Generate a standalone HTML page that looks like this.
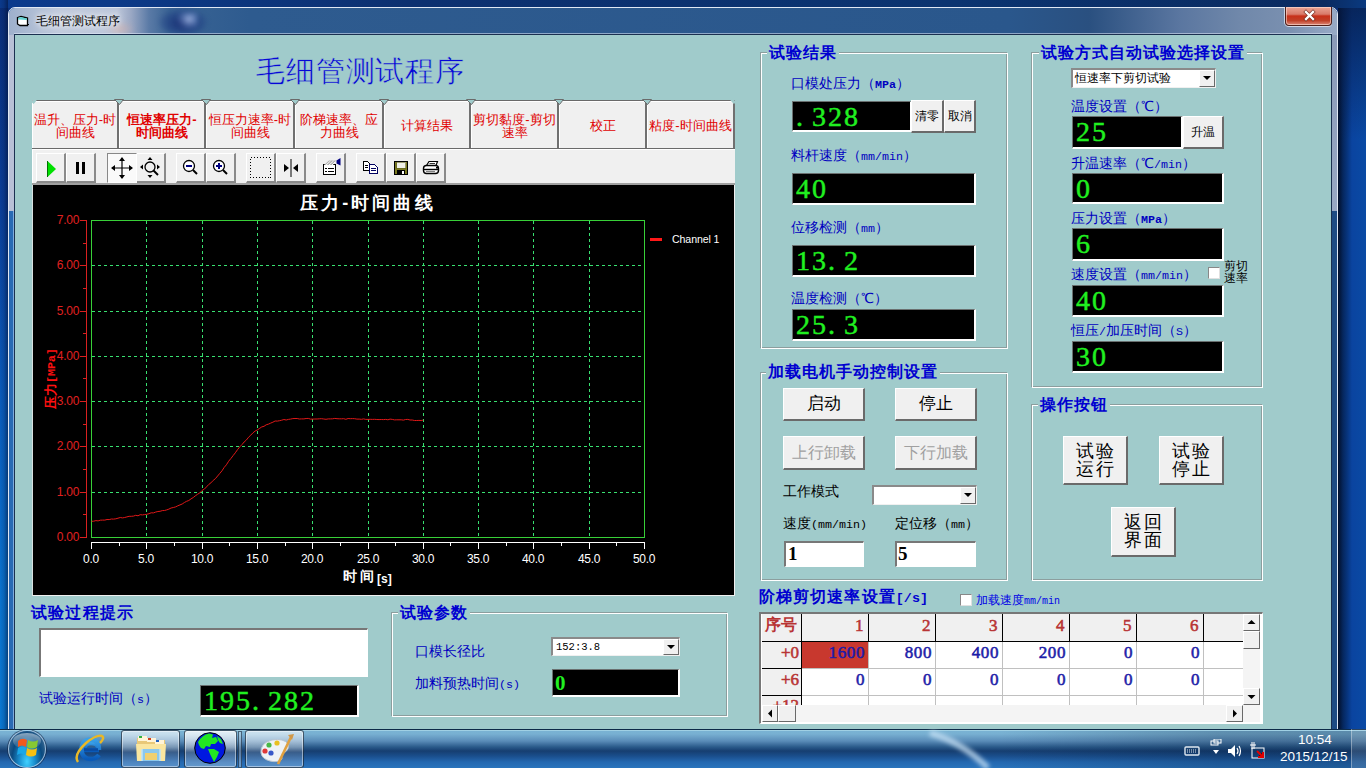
<!DOCTYPE html><html><head><meta charset="utf-8"><style>
*{box-sizing:border-box}
html,body{margin:0;padding:0}
body{width:1366px;height:768px;overflow:hidden;position:relative;background:#0d4c9c;font-family:"Liberation Sans",sans-serif;font-size:12px}
.a{position:absolute}
.t{position:absolute;white-space:nowrap;line-height:1}
.gb{position:absolute;border:1px solid #8c9e9e}
.gw{position:absolute;border:1px solid #fff}
.gt{position:absolute;white-space:nowrap;line-height:16px;color:#0000d0;font-weight:bold;font-size:16px;background:#a0cbcb;padding:0 2px;letter-spacing:1px}
.lbl{position:absolute;white-space:nowrap;line-height:13px;color:#0000e6;font-size:13px;font-weight:300}
.lcd{position:absolute;background:#000;border-top:1px solid #6a7070;border-left:1px solid #6a7070;border-bottom:2px solid #fff;border-right:2px solid #fff;overflow:hidden}
.lcd>span{position:absolute;left:1px;font-family:"Liberation Serif",serif;color:#20f020;-webkit-text-stroke:0.45px #20f020;letter-spacing:2px;white-space:nowrap;line-height:1}
.btn{position:absolute;background:#f0f0f0;border-top:1px solid #fff;border-left:1px solid #fff;border-right:2px solid #6a6a6a;border-bottom:2px solid #6a6a6a;color:#000;text-align:center;white-space:nowrap;font-weight:300}
.tb{position:absolute;top:153px;width:30px;height:30px;background:#f0f0f0;border-top:1px solid #fff;border-left:1px solid #fff;border-right:2px solid #8a8a8a;border-bottom:2px solid #8a8a8a}
.tab{position:absolute;top:100px;height:49px;background:#f0f0f0;border-top:1px solid #6a6a6a;border-left:1px solid #fff;border-right:2px solid #707070;box-shadow:inset 0 1px 0 #fff;color:#e00000;text-align:center;font-size:13px;line-height:13px;font-weight:300}
.wb{position:absolute;background:#fff;border-top:2px solid #777;border-left:2px solid #777;border-bottom:1px solid #fff;border-right:1px solid #fff}
.combo{position:absolute;background:#fff;border-top:2px solid #8a8a8a;border-left:2px solid #8a8a8a;border-bottom:1px solid #f0f0f0;border-right:1px solid #f0f0f0}
.dd{position:absolute;right:0;top:0;bottom:0;width:16px;background:#f0f0f0;border-top:1px solid #fff;border-left:1px solid #fff;border-right:1px solid #6a6a6a;border-bottom:1px solid #6a6a6a}
.dd:after{content:"";position:absolute;left:3px;top:5px;border-left:4px solid transparent;border-right:4px solid transparent;border-top:4px solid #000}
</style></head><body>
<div class="a" style="left:0px;top:0px;width:1366px;height:768px;background:linear-gradient(#0a2e78 0,#0b3e98 200px,#0a5cbc 400px,#0a74d0 600px,#0a7ad4 768px)"></div>
<div class="a" style="left:1338px;top:0px;width:28px;height:768px;background:linear-gradient(90deg,#020e28 0,#05275e 5px,#0a44a0 14px,#0a4aa4 28px)"></div>
<div class="a" style="left:1338px;top:0px;width:28px;height:140px;background:linear-gradient(rgba(6,24,64,.75),rgba(6,24,64,0))"></div>
<div class="a" style="left:0px;top:0px;width:1366px;height:8px;background:linear-gradient(90deg,#0b3a8c,#0c3a88 8%,#0c3070 30%,#0b3470 70%,#0a2a60 97%,#0a3a80)"></div>
<div class="a" style="left:8px;top:7px;width:1330px;height:770px;border-radius:7px 7px 0 0;background:linear-gradient(90deg,#2a6ab4 0,#2a6ab4 7px,#1e4c84 1323px,#1e4c84 1330px);border:1px solid #e0e8f4"></div>
<div class="a" style="left:9px;top:8px;width:1328px;height:27px;border-radius:6px 6px 0 0;background:linear-gradient(90deg,#9eb0cc 0,#c0cadc 50px,#bcc6da 108px,#9aa8c4 122px,#5a7aa6 140px,#3a6494 160px,#2e5b8f 240px,#2a578c 1000px,#2a5080 1080px,#5a76a0 1170px,#7088aa 1230px,#7a90b0 1280px,#98aac6 1328px)"></div>
<div class="a" style="left:158px;top:8px;width:50px;height:27px;border-radius:50%;filter:blur(2px);background:radial-gradient(ellipse at 50% 55%,rgba(20,40,110,.9) 0,rgba(30,60,130,.6) 45%,rgba(40,80,140,0) 75%)"></div>
<div class="a" style="left:176px;top:12px;width:22px;height:18px;filter:blur(2px);background:radial-gradient(ellipse at 60% 40%,rgba(190,210,250,.75) 0,rgba(160,190,240,.3) 40%,transparent 70%)"></div>
<div class="a" style="left:105px;top:22px;width:30px;height:14px;filter:blur(3px);background:radial-gradient(ellipse,rgba(230,170,150,.55),transparent 70%)"></div>
<div class="a" style="left:9px;top:25px;width:1328px;height:10px;background:linear-gradient(90deg,rgba(160,180,210,.0) 0,rgba(120,150,190,.0) 100%)"></div>
<div class="a" style="left:0px;top:0px;width:8px;height:768px;background:linear-gradient(90deg,rgba(0,0,0,0) 0,rgba(0,10,40,.15) 4px,rgba(0,10,40,.5) 8px)"></div>
<div class="a" style="left:13px;top:211px;width:1px;height:520px;background:rgba(200,225,255,.55)"></div>
<div class="a" style="left:9px;top:35px;width:5px;height:176px;background:#b8c0d6"></div>
<div class="a" style="left:1332px;top:35px;width:5px;height:176px;background:linear-gradient(#8a9ab8,#98a8c4)"></div>
<svg class="a" style="left:16px;top:15px" width="14" height="12" viewBox="0 0 14 12"><path d="M1.5 2.5 L5 1.5 L11.5 3 V10.5 L4 10.5 L1.5 9Z" fill="#fff" stroke="#000" stroke-width="1.3"/><path d="M2 3 L5 2 L11 3.5 V5 L2 4.5Z" fill="#60d0d0"/><path d="M12 9 L13 10" stroke="#000"/></svg>
<div class="t" style="left:36px;top:15px;font-size:12px;color:#000;font-weight:400;text-shadow:0 0 5px #fff,0 0 8px #fff">毛细管测试程序</div>
<div class="a" style="left:1285px;top:7px;width:47px;height:19px;border:1px solid #50201a;border-top:none;border-radius:0 0 4px 4px;box-shadow:0 1px 0 #d0d8e8,inset 0 0 0 1px rgba(255,230,220,.55),-1px 0 0 rgba(230,240,255,.7);background:linear-gradient(#eaa494 0,#d87a6a 40%,#c8301a 50%,#c04028 75%,#dc8878 100%)"></div>
<svg class="a" style="left:1300px;top:9px" width="18" height="14" viewBox="0 0 18 14"><path d="M6 3 L13 10 M13 3 L6 10" stroke="#6a2a20" stroke-width="3.8" stroke-linecap="square" opacity=".8"/><path d="M6 3 L13 10 M13 3 L6 10" stroke="#fff" stroke-width="2.3" stroke-linecap="square"/></svg>
<div class="a" style="left:14px;top:33px;width:1318px;height:1px;background:rgba(225,235,250,.55)"></div>
<div class="a" style="left:14px;top:34px;width:1318px;height:720px;background:#a0cbcb;border:1px solid #1b3050;border-bottom:none"></div>
<div class="t" style="left:256px;top:57px;font-size:29px;color:#0606d8;letter-spacing:0.85px;-webkit-text-stroke:0.5px #a0cbcb">毛细管测试程序</div>
<div class="tab" style="left:32px;width:87px;padding-top:12px;">温升、压力-时<br>间曲线</div>
<div class="tab" style="left:119px;width:87px;padding-top:12px;font-weight:bold;">恒速率压力-<br>时间曲线</div>
<div class="tab" style="left:206px;width:89px;padding-top:12px;">恒压力速率-时<br>间曲线</div>
<div class="tab" style="left:295px;width:89px;padding-top:12px;">阶梯速率、应<br>力曲线</div>
<div class="tab" style="left:384px;width:87px;padding-top:18px;">计算结果</div>
<div class="tab" style="left:471px;width:88px;padding-top:12px;">剪切黏度-剪切<br>速率</div>
<div class="tab" style="left:559px;width:88px;padding-top:18px;">校正</div>
<div class="tab" style="left:647px;width:88px;padding-top:18px;">粘度-时间曲线</div>
<div class="a" style="left:32px;top:148px;width:703px;height:2px;background:#6a6a6a"></div>
<svg class="a" style="left:0;top:0" width="760" height="110"><path d="M114.5 99.5 L119.5 104.5 L123.5 99.5Z" fill="#a0cbcb" stroke="#6a6a6a" stroke-width="1"/><path d="M201.5 99.5 L206.5 104.5 L210.5 99.5Z" fill="#a0cbcb" stroke="#6a6a6a" stroke-width="1"/><path d="M290.5 99.5 L295.5 104.5 L299.5 99.5Z" fill="#a0cbcb" stroke="#6a6a6a" stroke-width="1"/><path d="M379.5 99.5 L384.5 104.5 L388.5 99.5Z" fill="#a0cbcb" stroke="#6a6a6a" stroke-width="1"/><path d="M466.5 99.5 L471.5 104.5 L475.5 99.5Z" fill="#a0cbcb" stroke="#6a6a6a" stroke-width="1"/><path d="M554.5 99.5 L559.5 104.5 L563.5 99.5Z" fill="#a0cbcb" stroke="#6a6a6a" stroke-width="1"/><path d="M642.5 99.5 L647.5 104.5 L651.5 99.5Z" fill="#a0cbcb" stroke="#6a6a6a" stroke-width="1"/><path d="M32.5 103 L35.5 99.5" stroke="#a0cbcb" stroke-width="3"/><path d="M731.5 99.5 L735 103" stroke="#a0cbcb" stroke-width="3"/></svg>
<div class="a" style="left:32px;top:149px;width:703px;height:36px;background:#f0f0f0;border-top:1px solid #fff;border-left:1px solid #fff"></div>
<div class="a" style="left:32px;top:183px;width:703px;height:2px;background:#a0a0a0"></div>
<div class="tb" style="left:36px"></div>
<div class="tb" style="left:66px"></div>
<div class="tb" style="left:107px"></div>
<div class="tb" style="left:136px"></div>
<div class="tb" style="left:176px"></div>
<div class="tb" style="left:206px"></div>
<div class="tb" style="left:246px"></div>
<div class="tb" style="left:276px"></div>
<div class="tb" style="left:316px"></div>
<div class="tb" style="left:356px"></div>
<div class="tb" style="left:386px"></div>
<div class="tb" style="left:416px"></div>
<svg class="a" style="left:36px;top:153px" width="30" height="30" viewBox="0 0 30 30"><path d="M11.5 8 L20 16 L11.5 24 Z" fill="#00e000"/><path d="M11.5 24 L11.5 8" stroke="#007000" stroke-width="1"/></svg>
<svg class="a" style="left:66px;top:153px" width="30" height="30" viewBox="0 0 30 30"><rect x="10" y="9" width="3" height="12" fill="#000"/><rect x="16" y="9" width="3" height="12" fill="#000"/></svg>
<div class="a" style="left:107px;top:153px;width:30px;height:30px;background:#fafafa;border:1px solid #888;border-right-color:#fff;border-bottom-color:#fff"></div>
<svg class="a" style="left:107px;top:153px" width="30" height="30" viewBox="0 0 30 30"><path d="M15 5 V25 M5 15 H25" stroke="#000" stroke-width="1.2"/><path d="M15 4 L12 8 H18Z M15 26 L12 22 H18Z M4 15 L8 12 V18Z M26 15 L22 12 V18Z" fill="#000"/></svg>
<svg class="a" style="left:136px;top:153px" width="30" height="30" viewBox="0 0 30 30"><circle cx="14" cy="14" r="5" fill="none" stroke="#000" stroke-width="1.3"/><path d="M17.5 17.5 L22 22" stroke="#000" stroke-width="2"/><path d="M14 4 L11.5 7 H16.5Z M14 25 L11.5 22 H16.5Z M4 14 L7 11.5 V16.5Z M24 14 L21 11.5 V16.5Z" fill="#000"/></svg>
<svg class="a" style="left:176px;top:153px" width="30" height="30" viewBox="0 0 30 30"><circle cx="13" cy="13" r="5.5" fill="#fff" stroke="#000" stroke-width="1.3"/><path d="M10 13 H16" stroke="#000080" stroke-width="2"/><path d="M17 17 L21 21" stroke="#000" stroke-width="2"/></svg>
<svg class="a" style="left:206px;top:153px" width="30" height="30" viewBox="0 0 30 30"><circle cx="13" cy="13" r="5.5" fill="#fff" stroke="#000" stroke-width="1.3"/><path d="M10 13 H16 M13 10 V16" stroke="#000080" stroke-width="2"/><path d="M17 17 L21 21" stroke="#000" stroke-width="2"/></svg>
<svg class="a" style="left:246px;top:153px" width="30" height="30" viewBox="0 0 30 30"><rect x="4.5" y="4.5" width="20" height="20" fill="none" stroke="#000" stroke-width="1" stroke-dasharray="1,2" shape-rendering="crispEdges"/></svg>
<svg class="a" style="left:276px;top:153px" width="30" height="30" viewBox="0 0 30 30"><path d="M15 6 V24" stroke="#000" stroke-width="1"/><path d="M8 11 L13 15 L8 19Z M22 11 L17 15 L22 19Z" fill="#000"/></svg>
<svg class="a" style="left:316px;top:153px" width="30" height="30" viewBox="0 0 30 30"><g shape-rendering="crispEdges"><rect x="7.5" y="11.5" width="12" height="10" fill="#fff" stroke="#000" stroke-width="1.4"/><path d="M9 15.5H11M12 15.5H18M9 18.5H11M12 18.5H18" stroke="#000" stroke-width="1"/></g><path d="M8 12 L13 7.5 H20.5 L17 12Z" fill="#b0b0b0"/><path d="M10 12 L14.5 8 M13 12 L17.5 8 M16 12 L19.5 8.5" stroke="#fff" stroke-width="0.9"/><path d="M20.5 7.5 L24.5 5 V12.5 L20.5 10.5Z" fill="#000080"/></svg>
<svg class="a" style="left:356px;top:153px" width="30" height="30" viewBox="0 0 30 30"><g shape-rendering="crispEdges"><path d="M7.5 8.5 H11.5 L13.5 10.5 V17.5 H7.5Z" fill="#fff" stroke="#000" stroke-width="1.3"/><path d="M9 12.5H12 M9 14.5H12" stroke="#000"/><path d="M13.5 11.5 H18.5 L21.5 14.5 V20.5 H13.5Z" fill="#fff" stroke="#000060" stroke-width="1.3"/><path d="M15 15.5H20 M15 17.5H20" stroke="#000060"/></g></svg>
<svg class="a" style="left:386px;top:153px" width="30" height="30" viewBox="0 0 30 30"><g shape-rendering="crispEdges"><rect x="8.5" y="8.5" width="13" height="13" fill="#7a7a20" stroke="#000" stroke-width="1.2"/><rect x="10.5" y="9" width="9" height="6" fill="#f0f0e8" stroke="#606020" stroke-width="0.6"/><rect x="11" y="16.5" width="8" height="5" fill="#000"/><rect x="16" y="17.5" width="2" height="3" fill="#fff"/></g></svg>
<svg class="a" style="left:416px;top:153px" width="30" height="30" viewBox="0 0 30 30"><path d="M10.5 12.5 L13 8.5 H21.5 L20 12.5Z" fill="#fff" stroke="#000" stroke-width="1.2"/><path d="M13.5 10.5H19" stroke="#000" stroke-width="0.8"/><rect x="7.5" y="12.5" width="15" height="8" rx="3" fill="#fff" stroke="#000" stroke-width="1.4"/><path d="M8 16.5H22" stroke="#000" stroke-width="1.4"/><path d="M10 18.5H19" stroke="#808080" stroke-width="1.2"/><rect x="20" y="14" width="2" height="1.5" fill="#000"/></svg>
<div class="a" style="left:32px;top:185px;width:703px;height:411px;background:#000;border-right:1px solid #f0f0f0;border-bottom:1px solid #f0f0f0;border-left:1px solid #d8e0e0"></div>
<svg class="a" style="left:0;top:0" width="1366" height="768"><rect x="91.5" y="220.5" width="553" height="317" fill="none" stroke="#38d038" stroke-width="1"/><line x1="92" y1="492.5" x2="644" y2="492.5" stroke="#38e070" stroke-width="1" stroke-dasharray="3,3"/><line x1="92" y1="446.5" x2="644" y2="446.5" stroke="#38e070" stroke-width="1" stroke-dasharray="3,3"/><line x1="92" y1="401.5" x2="644" y2="401.5" stroke="#38e070" stroke-width="1" stroke-dasharray="3,3"/><line x1="92" y1="356.5" x2="644" y2="356.5" stroke="#38e070" stroke-width="1" stroke-dasharray="3,3"/><line x1="92" y1="311.5" x2="644" y2="311.5" stroke="#38e070" stroke-width="1" stroke-dasharray="3,3"/><line x1="92" y1="265.5" x2="644" y2="265.5" stroke="#38e070" stroke-width="1" stroke-dasharray="3,3"/><line x1="146.5" y1="221" x2="146.5" y2="537" stroke="#38e070" stroke-width="1" stroke-dasharray="3,3"/><line x1="202.5" y1="221" x2="202.5" y2="537" stroke="#38e070" stroke-width="1" stroke-dasharray="3,3"/><line x1="257.5" y1="221" x2="257.5" y2="537" stroke="#38e070" stroke-width="1" stroke-dasharray="3,3"/><line x1="312.5" y1="221" x2="312.5" y2="537" stroke="#38e070" stroke-width="1" stroke-dasharray="3,3"/><line x1="368.5" y1="221" x2="368.5" y2="537" stroke="#38e070" stroke-width="1" stroke-dasharray="3,3"/><line x1="423.5" y1="221" x2="423.5" y2="537" stroke="#38e070" stroke-width="1" stroke-dasharray="3,3"/><line x1="478.5" y1="221" x2="478.5" y2="537" stroke="#38e070" stroke-width="1" stroke-dasharray="3,3"/><line x1="533.5" y1="221" x2="533.5" y2="537" stroke="#38e070" stroke-width="1" stroke-dasharray="3,3"/><line x1="589.5" y1="221" x2="589.5" y2="537" stroke="#38e070" stroke-width="1" stroke-dasharray="3,3"/><line x1="86.5" y1="220" x2="86.5" y2="538" stroke="#d82020" stroke-width="1"/><line x1="80" y1="537.5" x2="87" y2="537.5" stroke="#d82020" stroke-width="1"/><line x1="83" y1="514.5" x2="87" y2="514.5" stroke="#d82020" stroke-width="1"/><line x1="80" y1="492.5" x2="87" y2="492.5" stroke="#d82020" stroke-width="1"/><line x1="83" y1="469.5" x2="87" y2="469.5" stroke="#d82020" stroke-width="1"/><line x1="80" y1="446.5" x2="87" y2="446.5" stroke="#d82020" stroke-width="1"/><line x1="83" y1="424.5" x2="87" y2="424.5" stroke="#d82020" stroke-width="1"/><line x1="80" y1="401.5" x2="87" y2="401.5" stroke="#d82020" stroke-width="1"/><line x1="83" y1="378.5" x2="87" y2="378.5" stroke="#d82020" stroke-width="1"/><line x1="80" y1="356.5" x2="87" y2="356.5" stroke="#d82020" stroke-width="1"/><line x1="83" y1="333.5" x2="87" y2="333.5" stroke="#d82020" stroke-width="1"/><line x1="80" y1="311.5" x2="87" y2="311.5" stroke="#d82020" stroke-width="1"/><line x1="83" y1="288.5" x2="87" y2="288.5" stroke="#d82020" stroke-width="1"/><line x1="80" y1="265.5" x2="87" y2="265.5" stroke="#d82020" stroke-width="1"/><line x1="83" y1="243.5" x2="87" y2="243.5" stroke="#d82020" stroke-width="1"/><line x1="80" y1="220.5" x2="87" y2="220.5" stroke="#d82020" stroke-width="1"/><line x1="91" y1="542.5" x2="645" y2="542.5" stroke="#fff" stroke-width="1.2"/><line x1="91.5" y1="542" x2="91.5" y2="549" stroke="#fff" stroke-width="1"/><line x1="119.5" y1="542" x2="119.5" y2="546" stroke="#fff" stroke-width="1"/><line x1="146.5" y1="542" x2="146.5" y2="549" stroke="#fff" stroke-width="1"/><line x1="174.5" y1="542" x2="174.5" y2="546" stroke="#fff" stroke-width="1"/><line x1="202.5" y1="542" x2="202.5" y2="549" stroke="#fff" stroke-width="1"/><line x1="229.5" y1="542" x2="229.5" y2="546" stroke="#fff" stroke-width="1"/><line x1="257.5" y1="542" x2="257.5" y2="549" stroke="#fff" stroke-width="1"/><line x1="285.5" y1="542" x2="285.5" y2="546" stroke="#fff" stroke-width="1"/><line x1="312.5" y1="542" x2="312.5" y2="549" stroke="#fff" stroke-width="1"/><line x1="340.5" y1="542" x2="340.5" y2="546" stroke="#fff" stroke-width="1"/><line x1="368.5" y1="542" x2="368.5" y2="549" stroke="#fff" stroke-width="1"/><line x1="395.5" y1="542" x2="395.5" y2="546" stroke="#fff" stroke-width="1"/><line x1="423.5" y1="542" x2="423.5" y2="549" stroke="#fff" stroke-width="1"/><line x1="450.5" y1="542" x2="450.5" y2="546" stroke="#fff" stroke-width="1"/><line x1="478.5" y1="542" x2="478.5" y2="549" stroke="#fff" stroke-width="1"/><line x1="506.5" y1="542" x2="506.5" y2="546" stroke="#fff" stroke-width="1"/><line x1="533.5" y1="542" x2="533.5" y2="549" stroke="#fff" stroke-width="1"/><line x1="561.5" y1="542" x2="561.5" y2="546" stroke="#fff" stroke-width="1"/><line x1="589.5" y1="542" x2="589.5" y2="549" stroke="#fff" stroke-width="1"/><line x1="616.5" y1="542" x2="616.5" y2="546" stroke="#fff" stroke-width="1"/><line x1="644.5" y1="542" x2="644.5" y2="549" stroke="#fff" stroke-width="1"/><polyline fill="none" stroke="#e01818" stroke-width="1" points="91.5,521.3 93.7,521.2 95.9,520.6 98.1,520.9 100.3,520.2 102.6,520.1 104.8,520.1 107.0,519.5 109.2,519.6 111.4,519.0 113.6,519.1 115.8,518.8 118.0,518.2 120.3,517.5 122.5,517.9 124.7,517.5 126.9,516.9 129.1,516.3 131.3,516.3 133.5,516.1 135.7,515.3 138.0,515.8 140.2,514.7 142.4,514.9 144.6,514.6 146.8,514.3 149.0,513.7 151.2,512.8 153.4,512.9 155.6,512.1 157.9,511.5 160.1,511.3 162.3,510.6 164.5,510.5 166.7,509.9 168.9,509.1 171.1,508.0 173.3,507.5 175.6,506.9 177.8,505.8 180.0,504.9 182.2,504.0 184.4,502.5 186.6,501.3 188.8,500.5 191.0,498.9 193.3,497.5 195.5,495.7 197.7,494.2 199.9,492.8 202.1,490.4 204.3,489.2 206.5,486.9 208.7,484.5 210.9,482.9 213.2,480.4 215.4,478.7 217.6,476.0 219.8,473.4 222.0,470.8 224.2,467.4 226.4,464.8 228.6,461.3 230.9,458.5 233.1,455.6 235.3,452.8 237.5,449.7 239.7,446.9 241.9,444.7 244.1,442.0 246.3,440.1 248.6,437.2 250.8,435.1 253.0,432.8 255.2,431.0 257.4,429.9 259.6,428.4 261.8,426.9 264.0,426.3 266.2,424.8 268.5,424.1 270.7,423.1 272.9,422.2 275.1,421.0 277.3,421.1 279.5,420.7 281.7,420.2 283.9,419.5 286.2,420.0 288.4,419.4 290.6,419.1 292.8,418.6 295.0,418.5 297.2,418.5 299.4,419.0 301.6,418.9 303.9,418.9 306.1,418.5 308.3,418.4 310.5,419.1 312.7,419.1 314.9,419.0 317.1,419.0 319.3,418.8 321.5,418.7 323.8,419.0 326.0,419.3 328.2,418.9 330.4,418.9 332.6,418.8 334.8,418.4 337.0,418.7 339.2,418.8 341.5,418.8 343.7,418.7 345.9,419.3 348.1,418.5 350.3,418.7 352.5,418.6 354.7,418.7 356.9,419.1 359.2,419.1 361.4,419.3 363.6,418.9 365.8,419.4 368.0,419.4 370.2,419.3 372.4,419.4 374.6,419.3 376.8,419.5 379.1,419.6 381.3,419.5 383.5,419.6 385.7,419.4 387.9,419.8 390.1,419.1 392.3,419.4 394.5,419.9 396.8,419.8 399.0,419.8 401.2,419.8 403.4,420.1 405.6,419.5 407.8,419.4 410.0,420.0 412.2,420.0 414.5,420.5 416.7,420.5 418.9,420.4 421.1,420.5 423.3,420.1"/><line x1="650" y1="239.5" x2="662" y2="239.5" stroke="#ff1818" stroke-width="3"/></svg>
<div class="t" style="left:40px;top:531px;width:39px;text-align:right;font-size:12px;color:#e02020;letter-spacing:-0.3px">0.00</div>
<div class="t" style="left:40px;top:486px;width:39px;text-align:right;font-size:12px;color:#e02020;letter-spacing:-0.3px">1.00</div>
<div class="t" style="left:40px;top:440px;width:39px;text-align:right;font-size:12px;color:#e02020;letter-spacing:-0.3px">2.00</div>
<div class="t" style="left:40px;top:395px;width:39px;text-align:right;font-size:12px;color:#e02020;letter-spacing:-0.3px">3.00</div>
<div class="t" style="left:40px;top:350px;width:39px;text-align:right;font-size:12px;color:#e02020;letter-spacing:-0.3px">4.00</div>
<div class="t" style="left:40px;top:305px;width:39px;text-align:right;font-size:12px;color:#e02020;letter-spacing:-0.3px">5.00</div>
<div class="t" style="left:40px;top:259px;width:39px;text-align:right;font-size:12px;color:#e02020;letter-spacing:-0.3px">6.00</div>
<div class="t" style="left:40px;top:214px;width:39px;text-align:right;font-size:12px;color:#e02020;letter-spacing:-0.3px">7.00</div>
<div class="t" style="left:71px;top:553px;width:40px;text-align:center;font-size:12px;color:#fff;letter-spacing:-0.3px">0.0</div>
<div class="t" style="left:126px;top:553px;width:40px;text-align:center;font-size:12px;color:#fff;letter-spacing:-0.3px">5.0</div>
<div class="t" style="left:182px;top:553px;width:40px;text-align:center;font-size:12px;color:#fff;letter-spacing:-0.3px">10.0</div>
<div class="t" style="left:237px;top:553px;width:40px;text-align:center;font-size:12px;color:#fff;letter-spacing:-0.3px">15.0</div>
<div class="t" style="left:292px;top:553px;width:40px;text-align:center;font-size:12px;color:#fff;letter-spacing:-0.3px">20.0</div>
<div class="t" style="left:348px;top:553px;width:40px;text-align:center;font-size:12px;color:#fff;letter-spacing:-0.3px">25.0</div>
<div class="t" style="left:403px;top:553px;width:40px;text-align:center;font-size:12px;color:#fff;letter-spacing:-0.3px">30.0</div>
<div class="t" style="left:458px;top:553px;width:40px;text-align:center;font-size:12px;color:#fff;letter-spacing:-0.3px">35.0</div>
<div class="t" style="left:513px;top:553px;width:40px;text-align:center;font-size:12px;color:#fff;letter-spacing:-0.3px">40.0</div>
<div class="t" style="left:569px;top:553px;width:40px;text-align:center;font-size:12px;color:#fff;letter-spacing:-0.3px">45.0</div>
<div class="t" style="left:624px;top:553px;width:40px;text-align:center;font-size:12px;color:#fff;letter-spacing:-0.3px">50.0</div>
<div class="t" style="left:300px;top:194px;font-size:18px;line-height:18px;color:#fff;font-weight:bold;letter-spacing:3.1px">压力-时间曲线</div>
<div class="t" style="left:343px;top:569px;font-size:14px;line-height:14px;color:#fff;font-weight:bold;letter-spacing:3px">时间<span style="font-size:12px;letter-spacing:0;position:relative;top:2px">[s]</span></div>
<div class="t" style="left:18px;top:372px;width:64px;height:13px;line-height:13px;transform:rotate(-90deg);font-size:13px;color:#ff1010;font-weight:bold;text-align:center">压力<span style="font-family:Liberation Mono;font-size:11.67px">[MPa]</span></div>
<div class="t" style="left:672px;top:234px;font-size:10.6px;color:#fff;letter-spacing:-0.1px">Channel 1</div>
<div class="t" style="left:31px;top:605px;font-size:16px;color:#0000d0;font-weight:bold;letter-spacing:1.2px">试验过程提示</div>
<div class="wb" style="left:39px;top:628px;width:329px;height:49px"></div>
<div class="t" style="left:39px;top:691px;font-size:14px;line-height:14px;color:#0000c0;font-weight:300;">试验运行时间（<span style="font-family:Liberation Mono;font-size:11.67px;">s</span>）</div>
<div class="lcd" style="left:200px;top:685px;width:159px;height:32px"><span style="font-size:28px;top:1px;left:3px">195.<span style="display:inline-block;width:7px"></span>282</span></div>
<div class="gb" style="left:391px;top:612px;width:336px;height:104px"></div>
<div class="gw" style="left:392px;top:613px;width:336px;height:104px"></div>
<div class="gt" style="left:398px;top:605px">试验参数</div>
<div class="t" style="left:415px;top:644px;font-size:14px;line-height:14px;color:#0000c0;font-weight:300;">口模长径比</div>
<div class="t" style="left:415px;top:676px;font-size:14px;line-height:14px;color:#0000c0;font-weight:300;">加料预热时间<span style="font-family:Liberation Mono;font-size:11.67px;">(s)</span></div>
<div class="combo" style="left:551px;top:637px;width:129px;height:19px"><div class="t" style="left:2px;top:2px;font-size:12px;font-family:Liberation Mono;font-size:10.5px;top:3px;left:3px;letter-spacing:0px">152:3.8</div><div class="dd"></div></div>
<div class="lcd" style="left:552px;top:669px;width:128px;height:28px"><span style="font-size:21px;top:3px;left:2px;font-weight:bold;-webkit-text-stroke:0">0</span></div>
<div class="gb" style="left:760px;top:52px;width:247px;height:296px"></div>
<div class="gw" style="left:761px;top:53px;width:247px;height:296px"></div>
<div class="gt" style="left:767px;top:45px">试验结果</div>
<div class="t" style="left:791px;top:76px;font-size:14px;line-height:14px;color:#0000c0;font-weight:300;">口模处压力（<span style="font-family:Liberation Mono;font-size:11.67px;font-weight:bold;">MPa</span>）</div>
<div class="lcd" style="left:792px;top:101px;width:120px;height:31px"><span style="font-size:28px;top:1px;left:3px">.<span style="display:inline-block;width:7px"></span>328</span></div>
<div class="btn" style="left:911px;top:100px;width:33px;height:33px;font-size:12px;line-height:30px;">清零</div>
<div class="btn" style="left:944px;top:100px;width:32px;height:33px;font-size:12px;line-height:30px;">取消</div>
<div class="t" style="left:791px;top:148px;font-size:14px;line-height:14px;color:#0000c0;font-weight:300;">料杆速度（<span style="font-family:Liberation Mono;font-size:11.67px;">mm/min</span>）</div>
<div class="lcd" style="left:792px;top:173px;width:184px;height:32px"><span style="font-size:28px;top:1px;left:3px">40</span></div>
<div class="t" style="left:791px;top:220px;font-size:14px;line-height:14px;color:#0000c0;font-weight:300;">位移检测（<span style="font-family:Liberation Mono;font-size:11.67px;">mm</span>）</div>
<div class="lcd" style="left:792px;top:245px;width:184px;height:32px"><span style="font-size:28px;top:1px;left:3px">13.<span style="display:inline-block;width:7px"></span>2</span></div>
<div class="t" style="left:791px;top:291px;font-size:14px;line-height:14px;color:#0000c0;font-weight:300;">温度检测（℃）</div>
<div class="lcd" style="left:792px;top:309px;width:184px;height:32px"><span style="font-size:28px;top:1px;left:3px">25.<span style="display:inline-block;width:7px"></span>3</span></div>
<div class="gb" style="left:760px;top:372px;width:247px;height:208px"></div>
<div class="gw" style="left:761px;top:373px;width:247px;height:208px"></div>
<div class="gt" style="left:766px;top:364px">加载电机手动控制设置</div>
<div class="btn" style="left:783px;top:388px;width:82px;height:33px;font-size:17px;line-height:30px;">启动</div>
<div class="btn" style="left:895px;top:388px;width:82px;height:33px;font-size:17px;line-height:30px;">停止</div>
<div class="btn" style="left:783px;top:436px;width:82px;height:34px;font-size:16px;line-height:31px;color:#a0a0a0">上行卸载</div>
<div class="btn" style="left:895px;top:436px;width:82px;height:34px;font-size:16px;line-height:31px;color:#a0a0a0">下行加载</div>
<div class="t" style="left:783px;top:484px;font-size:14px;line-height:14px;color:#000;font-weight:300;">工作模式</div>
<div class="combo" style="left:872px;top:485px;width:105px;height:20px"><div class="t" style="left:2px;top:2px;font-size:12px;"></div><div class="dd"></div></div>
<div class="t" style="left:783px;top:516px;font-size:14px;line-height:14px;color:#000;font-weight:300;">速度<span style="font-family:Liberation Mono;font-size:11.67px;">(mm/min)</span></div>
<div class="t" style="left:895px;top:516px;font-size:14px;line-height:14px;color:#000;font-weight:300;">定位移（<span style="font-family:Liberation Mono;font-size:11.67px;">mm</span>）</div>
<div class="wb" style="left:784px;top:541px;width:80px;height:26px"><div class="t" style="left:2px;top:1px;font-size:19px;line-height:19px;font-family:Liberation Serif;font-weight:bold">1</div></div>
<div class="wb" style="left:895px;top:541px;width:81px;height:26px"><div class="t" style="left:1px;top:1px;font-size:19px;line-height:19px;font-family:Liberation Serif;font-weight:bold">5</div></div>
<div class="gb" style="left:1031px;top:52px;width:231px;height:335px"></div>
<div class="gw" style="left:1032px;top:53px;width:231px;height:335px"></div>
<div class="gt" style="left:1039px;top:45px">试验方式自动试验选择设置</div>
<div class="combo" style="left:1071px;top:68px;width:145px;height:20px"><div class="t" style="left:2px;top:2px;font-size:12px;font-size:12px;top:2px;font-weight:300">恒速率下剪切试验</div><div class="dd"></div></div>
<div class="t" style="left:1071px;top:99px;font-size:14px;line-height:14px;color:#0000c0;font-weight:300;">温度设置（℃）</div>
<div class="lcd" style="left:1072px;top:116px;width:111px;height:33px"><span style="font-size:28px;top:1px;left:3px">25</span></div>
<div class="btn" style="left:1183px;top:116px;width:41px;height:33px;font-size:12px;line-height:30px;">升温</div>
<div class="t" style="left:1071px;top:156px;font-size:14px;line-height:14px;color:#0000c0;font-weight:300;">升温速率（℃<span style="font-family:Liberation Mono;font-size:11.67px;">/min</span>）</div>
<div class="lcd" style="left:1072px;top:173px;width:152px;height:31px"><span style="font-size:28px;top:1px;left:3px">0</span></div>
<div class="t" style="left:1071px;top:211px;font-size:14px;line-height:14px;color:#0000c0;font-weight:300;">压力设置（<span style="font-family:Liberation Mono;font-size:11.67px;font-weight:bold;">MPa</span>）</div>
<div class="lcd" style="left:1072px;top:228px;width:152px;height:33px"><span style="font-size:28px;top:1px;left:3px">6</span></div>
<div class="t" style="left:1071px;top:267px;font-size:14px;line-height:14px;color:#0000c0;font-weight:300;">速度设置（<span style="font-family:Liberation Mono;font-size:11.67px;">mm/min</span>）</div>
<div class="a" style="left:1208px;top:267px;width:12px;height:12px;background:#fff;border-top:1px solid #888;border-left:1px solid #888;border-right:1px solid #e0e0e0;border-bottom:1px solid #e0e0e0"></div>
<div class="t" style="left:1224px;top:260px;font-size:12px;line-height:12px;color:#000;font-weight:400">剪切<br>速率</div>
<div class="lcd" style="left:1072px;top:285px;width:152px;height:32px"><span style="font-size:28px;top:1px;left:3px">40</span></div>
<div class="t" style="left:1071px;top:323px;font-size:14px;line-height:14px;color:#0000c0;font-weight:300;">恒压<span style="font-family:Liberation Mono;font-size:11.67px;">/</span>加压时间（<span style="font-family:Liberation Mono;font-size:11.67px;">S</span>）</div>
<div class="lcd" style="left:1072px;top:341px;width:152px;height:32px"><span style="font-size:28px;top:1px;left:3px">30</span></div>
<div class="gb" style="left:1031px;top:404px;width:231px;height:176px"></div>
<div class="gw" style="left:1032px;top:405px;width:231px;height:176px"></div>
<div class="gt" style="left:1038px;top:397px">操作按钮</div>
<div class="btn" style="left:1063px;top:436px;width:65px;height:49px;font-size:18px;line-height:18px;padding-top:5px;letter-spacing:1.5px;padding-left:1.5px">试验<br>运行</div>
<div class="btn" style="left:1159px;top:436px;width:65px;height:49px;font-size:18px;line-height:18px;padding-top:5px;letter-spacing:1.5px;padding-left:1.5px">试验<br>停止</div>
<div class="btn" style="left:1111px;top:507px;width:65px;height:50px;font-size:18px;line-height:18px;padding-top:5px;letter-spacing:1.5px;padding-left:1.5px">返回<br>界面</div>
<div class="t" style="left:759px;top:589px;font-size:16px;color:#0000d0;font-weight:bold;letter-spacing:1.1px">阶梯剪切速率设置<span style="font-family:Liberation Mono;font-size:13.4px;letter-spacing:0">[/s]</span></div>
<div class="a" style="left:960px;top:594px;width:12px;height:12px;background:#fff;border-top:1px solid #888;border-left:1px solid #888;border-right:1px solid #e0e0e0;border-bottom:1px solid #e0e0e0"></div>
<div class="t" style="left:976px;top:594px;font-size:12px;color:#0000e6;font-weight:300">加载速度<span style="font-family:Liberation Mono;font-size:10px">mm/min</span></div>
<div class="a" style="left:759px;top:612px;width:504px;height:112px;background:#fff;border-top:2px solid #777;border-left:2px solid #777;border-right:1px solid #fff;border-bottom:1px solid #fff"></div>
<div class="a" style="left:762px;top:614px;width:481px;height:27px;background:#f0f0f0"></div><div class="a" style="left:762px;top:641px;width:39px;height:64px;background:#f0f0f0"></div><div class="a" style="left:802px;top:642px;width:66px;height:26px;background:#c8382e"></div><div class="a" style="left:762px;top:641px;width:481px;height:1px;background:#000"></div><div class="a" style="left:801px;top:614px;width:1px;height:27px;background:#000"></div><div class="a" style="left:868px;top:614px;width:1px;height:27px;background:#000"></div><div class="a" style="left:935px;top:614px;width:1px;height:27px;background:#000"></div><div class="a" style="left:1002px;top:614px;width:1px;height:27px;background:#000"></div><div class="a" style="left:1069px;top:614px;width:1px;height:27px;background:#000"></div><div class="a" style="left:1136px;top:614px;width:1px;height:27px;background:#000"></div><div class="a" style="left:1203px;top:614px;width:1px;height:27px;background:#000"></div><div class="a" style="left:801px;top:641px;width:1px;height:64px;background:#000"></div><div class="a" style="left:762px;top:668px;width:39px;height:1px;background:#000"></div><div class="a" style="left:802px;top:668px;width:441px;height:1px;background:#c0c0c0"></div><div class="a" style="left:762px;top:695px;width:39px;height:1px;background:#000"></div><div class="a" style="left:802px;top:695px;width:441px;height:1px;background:#c0c0c0"></div><div class="a" style="left:868px;top:642px;width:1px;height:63px;background:#c0c0c0"></div><div class="a" style="left:935px;top:642px;width:1px;height:63px;background:#c0c0c0"></div><div class="a" style="left:1002px;top:642px;width:1px;height:63px;background:#c0c0c0"></div><div class="a" style="left:1069px;top:642px;width:1px;height:63px;background:#c0c0c0"></div><div class="a" style="left:1136px;top:642px;width:1px;height:63px;background:#c0c0c0"></div><div class="a" style="left:1203px;top:642px;width:1px;height:63px;background:#c0c0c0"></div><div class="t" style="left:765px;top:617px;font-size:16px;color:#b83434;font-weight:bold">序号</div><div class="t" style="left:801px;top:617px;width:63px;text-align:right;font-size:17px;letter-spacing:0.5px;color:#b83434;font-family:Liberation Serif;font-weight:normal;-webkit-text-stroke:0.55px currentColor;">1</div><div class="t" style="left:868px;top:617px;width:63px;text-align:right;font-size:17px;letter-spacing:0.5px;color:#b83434;font-family:Liberation Serif;font-weight:normal;-webkit-text-stroke:0.55px currentColor;">2</div><div class="t" style="left:935px;top:617px;width:63px;text-align:right;font-size:17px;letter-spacing:0.5px;color:#b83434;font-family:Liberation Serif;font-weight:normal;-webkit-text-stroke:0.55px currentColor;">3</div><div class="t" style="left:1002px;top:617px;width:63px;text-align:right;font-size:17px;letter-spacing:0.5px;color:#b83434;font-family:Liberation Serif;font-weight:normal;-webkit-text-stroke:0.55px currentColor;">4</div><div class="t" style="left:1069px;top:617px;width:63px;text-align:right;font-size:17px;letter-spacing:0.5px;color:#b83434;font-family:Liberation Serif;font-weight:normal;-webkit-text-stroke:0.55px currentColor;">5</div><div class="t" style="left:1136px;top:617px;width:63px;text-align:right;font-size:17px;letter-spacing:0.5px;color:#b83434;font-family:Liberation Serif;font-weight:normal;-webkit-text-stroke:0.55px currentColor;">6</div><div class="t" style="left:762px;top:644px;width:37px;text-align:right;font-size:17px;color:#b83434;font-family:Liberation Serif;font-weight:normal;-webkit-text-stroke:0.55px currentColor;">+0</div><div class="t" style="left:762px;top:671px;width:37px;text-align:right;font-size:17px;color:#b83434;font-family:Liberation Serif;font-weight:normal;-webkit-text-stroke:0.55px currentColor;">+6</div><div class="t" style="left:762px;top:697px;width:37px;text-align:right;font-size:17px;color:#b83434;font-family:Liberation Serif;font-weight:normal;-webkit-text-stroke:0.55px currentColor;">+12</div><div class="t" style="left:801px;top:644px;width:64px;text-align:right;font-size:17px;letter-spacing:0.6px;color:#1c1ca8;font-family:Liberation Serif;font-weight:normal;-webkit-text-stroke:0.55px currentColor;">1600</div><div class="t" style="left:868px;top:644px;width:64px;text-align:right;font-size:17px;letter-spacing:0.6px;color:#1c1ca8;font-family:Liberation Serif;font-weight:normal;-webkit-text-stroke:0.55px currentColor;">800</div><div class="t" style="left:935px;top:644px;width:64px;text-align:right;font-size:17px;letter-spacing:0.6px;color:#1c1ca8;font-family:Liberation Serif;font-weight:normal;-webkit-text-stroke:0.55px currentColor;">400</div><div class="t" style="left:1002px;top:644px;width:64px;text-align:right;font-size:17px;letter-spacing:0.6px;color:#1c1ca8;font-family:Liberation Serif;font-weight:normal;-webkit-text-stroke:0.55px currentColor;">200</div><div class="t" style="left:1069px;top:644px;width:64px;text-align:right;font-size:17px;letter-spacing:0.6px;color:#1c1ca8;font-family:Liberation Serif;font-weight:normal;-webkit-text-stroke:0.55px currentColor;">0</div><div class="t" style="left:1136px;top:644px;width:64px;text-align:right;font-size:17px;letter-spacing:0.6px;color:#1c1ca8;font-family:Liberation Serif;font-weight:normal;-webkit-text-stroke:0.55px currentColor;">0</div><div class="t" style="left:801px;top:671px;width:64px;text-align:right;font-size:17px;letter-spacing:0.6px;color:#1c1ca8;font-family:Liberation Serif;font-weight:normal;-webkit-text-stroke:0.55px currentColor;">0</div><div class="t" style="left:868px;top:671px;width:64px;text-align:right;font-size:17px;letter-spacing:0.6px;color:#1c1ca8;font-family:Liberation Serif;font-weight:normal;-webkit-text-stroke:0.55px currentColor;">0</div><div class="t" style="left:935px;top:671px;width:64px;text-align:right;font-size:17px;letter-spacing:0.6px;color:#1c1ca8;font-family:Liberation Serif;font-weight:normal;-webkit-text-stroke:0.55px currentColor;">0</div><div class="t" style="left:1002px;top:671px;width:64px;text-align:right;font-size:17px;letter-spacing:0.6px;color:#1c1ca8;font-family:Liberation Serif;font-weight:normal;-webkit-text-stroke:0.55px currentColor;">0</div><div class="t" style="left:1069px;top:671px;width:64px;text-align:right;font-size:17px;letter-spacing:0.6px;color:#1c1ca8;font-family:Liberation Serif;font-weight:normal;-webkit-text-stroke:0.55px currentColor;">0</div><div class="t" style="left:1136px;top:671px;width:64px;text-align:right;font-size:17px;letter-spacing:0.6px;color:#1c1ca8;font-family:Liberation Serif;font-weight:normal;-webkit-text-stroke:0.55px currentColor;">0</div><div class="a" style="left:762px;top:705px;width:481px;height:17px;background:#f4f4f4"></div><div class="a" style="left:1243px;top:614px;width:17px;height:108px;background:#f4f4f4"></div><div class="a" style="left:762px;top:705px;width:16px;height:17px;background:#f0f0f0;border-top:1px solid #fff;border-left:1px solid #fff;border-right:1px solid #696969;border-bottom:1px solid #696969"><svg class="a" style="left:0;top:0" width="14" height="15"><path d="M5 7.5 L9 3.5 V11.5Z" fill="#000"/></svg></div><div class="a" style="left:778px;top:705px;width:18px;height:17px;background:#f0f0f0;border-top:1px solid #fff;border-left:1px solid #fff;border-right:1px solid #696969;border-bottom:1px solid #696969"></div><div class="a" style="left:1226px;top:705px;width:17px;height:17px;background:#f0f0f0;border-top:1px solid #fff;border-left:1px solid #fff;border-right:1px solid #696969;border-bottom:1px solid #696969"><svg class="a" style="left:0;top:0" width="15" height="15"><path d="M10 7.5 L6 3.5 V11.5Z" fill="#000"/></svg></div><div class="a" style="left:1243px;top:614px;width:17px;height:17px;background:#f0f0f0;border-top:1px solid #fff;border-left:1px solid #fff;border-right:1px solid #696969;border-bottom:1px solid #696969"><svg class="a" style="left:0;top:0" width="15" height="15"><path d="M7.5 5 L3.5 9 H11.5Z" fill="#000"/></svg></div><div class="a" style="left:1243px;top:631px;width:17px;height:18px;background:#f0f0f0;border-top:1px solid #fff;border-left:1px solid #fff;border-right:1px solid #696969;border-bottom:1px solid #696969"></div><div class="a" style="left:1243px;top:688px;width:17px;height:17px;background:#f0f0f0;border-top:1px solid #fff;border-left:1px solid #fff;border-right:1px solid #696969;border-bottom:1px solid #696969"><svg class="a" style="left:0;top:0" width="15" height="15"><path d="M7.5 10 L3.5 6 H11.5Z" fill="#000"/></svg></div>
<div class="a" style="left:0px;top:729px;width:1366px;height:39px;background:linear-gradient(#7ab4d4 0,#78b0d2 5px,#5a8cb8 12px,#2a5a8a 18px,#163e70 22px,#1a4e8c 27px,#2468b0 33px,#2a74bc 39px)"></div>
<div class="a" style="left:0px;top:729px;width:1366px;height:1px;background:#0e2a48"></div>
<div class="a" style="left:0px;top:730px;width:1366px;height:1px;background:#a0d0e4"></div>
<div class="a" style="left:1000px;top:731px;width:366px;height:37px;background:linear-gradient(90deg,rgba(0,20,50,0),rgba(0,20,50,.22) 60%,rgba(0,20,50,.25))"></div>
<svg class="a" style="left:900px;top:729px" width="120" height="39"><defs><filter id="bl"><feGaussianBlur stdDeviation="2"/></filter></defs><path d="M30 4 Q60 12 88 39" stroke="rgba(200,225,245,.75)" stroke-width="6" fill="none" filter="url(#bl)"/></svg>
<div class="a" style="left:8px;top:730px;width:38px;height:38px;border-radius:50%;background:radial-gradient(ellipse at 50% 85%,#40d0ff 0,#1a90d0 30%,#0a4a80 60%,#3a6890 85%,#8aa8c0 100%);border:1px solid rgba(190,215,240,.8);box-shadow:0 0 0 1px rgba(20,40,70,.6)"></div>
<div class="a" style="left:13px;top:733px;width:28px;height:16px;border-radius:50%;background:linear-gradient(rgba(255,255,255,.5),rgba(255,255,255,.05))"></div>
<svg class="a" style="left:16px;top:736px" width="24" height="24" viewBox="0 0 24 24"><path d="M2 5 Q6 1 11 4 L10 11 Q6 8 2 11Z" fill="#f25a1e"/><path d="M12 4 Q17 7 22 4 L21 11 Q16 14 11 11Z" fill="#86c832"/><path d="M2 12 Q6 9 10 12 L9 19 Q5 16 1 19Z" fill="#1aa8e8"/><path d="M11 12 Q16 15 21 12 L20 19 Q15 22 10 19Z" fill="#f8c010"/></svg>
<svg class="a" style="left:72px;top:731px" width="34" height="34" viewBox="0 0 34 34"><defs><linearGradient id="ieg" x1="0" y1="0" x2="0" y2="1"><stop offset="0" stop-color="#3aa0e8"/><stop offset="1" stop-color="#0a5ab8"/></linearGradient></defs><path d="M27 19 H12 Q12 12 19 12 Q25 12 26.5 17" fill="none" stroke="url(#ieg)" stroke-width="4.5"/><path d="M27 19 Q27 9 19 8.5 Q9.5 9 9.5 18.5 Q10 28 19 28 Q24 28 27 24" fill="none" stroke="url(#ieg)" stroke-width="4.5"/><path d="M12 18.5 H26" stroke="#0a4aa0" stroke-width="2.5"/><path d="M6 31 Q1 24 14 12 Q25 3 30 5 Q33 7 28 12" fill="none" stroke="#e8b828" stroke-width="2.5"/></svg>
<div class="a" style="left:121px;top:730px;width:59px;height:38px;border:1px solid rgba(10,30,50,.7);border-radius:3px;background:linear-gradient(rgba(255,255,255,0.62),rgba(255,255,255,0.37) 45%,rgba(255,255,255,0.15) 60%,rgba(255,255,255,0.22));box-shadow:inset 0 0 0 1px rgba(255,255,255,.45)"></div>
<div class="a" style="left:184px;top:730px;width:53px;height:38px;border:1px solid rgba(10,30,50,.7);border-radius:3px;background:linear-gradient(rgba(255,255,255,0.8),rgba(255,255,255,0.48) 45%,rgba(255,255,255,0.20) 60%,rgba(255,255,255,0.28));box-shadow:inset 0 0 0 1px rgba(255,255,255,.45)"></div>
<div class="a" style="left:245px;top:730px;width:59px;height:38px;border:1px solid rgba(10,30,50,.7);border-radius:3px;background:linear-gradient(rgba(255,255,255,0.62),rgba(255,255,255,0.37) 45%,rgba(255,255,255,0.15) 60%,rgba(255,255,255,0.22));box-shadow:inset 0 0 0 1px rgba(255,255,255,.45)"></div>
<div class="a" style="left:238px;top:731px;width:4px;height:37px;border:1px solid rgba(10,30,50,.6);background:rgba(255,255,255,.3)"></div>
<svg class="a" style="left:134px;top:733px" width="36" height="32" viewBox="0 0 36 32"><path d="M3 5 H12 L14 7 H31 V27 H3Z" fill="#e8c878"/><rect x="4" y="3" width="9" height="5" fill="#fff4d8"/><rect x="5" y="3" width="3" height="2" fill="#30b040"/><rect x="13" y="5" width="9" height="4" fill="#fff4d8"/><rect x="14" y="5" width="3" height="2" fill="#d04020"/><rect x="21" y="7" width="9" height="4" fill="#fff4d8"/><rect x="22" y="7" width="3" height="2" fill="#2060c0"/><path d="M2 11 H32 L31 28 H3Z" fill="#fae6a0"/><path d="M8 16 H26 V28 H8Z" fill="#8cc8ec"/><path d="M11 20 H23 V27 H11Z" fill="#f0d070"/><path d="M8 16 V28 M26 16 V28" stroke="#c0e4f8" stroke-width="1.5"/></svg>
<svg class="a" style="left:194px;top:732px" width="34" height="34" viewBox="0 0 34 34"><circle cx="16" cy="16" r="15.3" fill="#0018e0" stroke="#000" stroke-width="1"/><path d="M4 10 Q8 3 15 1.5 L19 2.5 L18 6 L22 5 L24 9 L21 12 L17 12 L16 15 L12 14 L10 17 L7 16 L5 13Z" fill="#22e622"/><path d="M23 4 L27 7 L29 12 L26 11 L24 8Z" fill="#22e622"/><path d="M14 17 L20 17 L25 20 L23 25 L20 30 L18 26 L16 22Z" fill="#22e622"/></svg>
<svg class="a" style="left:258px;top:731px" width="40" height="36" viewBox="0 0 40 36"><path d="M3 22 Q2 12 14 9 Q26 7 30 13 Q32 18 26 22 Q22 24 24 28 Q20 32 12 30 Q4 28 3 22Z" fill="#eef2f6" stroke="#b8c4d0" stroke-width="1"/><circle cx="7" cy="20" r="2.6" fill="#e03838"/><circle cx="11" cy="14" r="2.6" fill="#48b848"/><circle cx="19" cy="12" r="2.6" fill="#e8c020"/><circle cx="13" cy="22" r="2.6" fill="#3858c8"/><path d="M33 6 L20 33" stroke="#e0a040" stroke-width="2.6"/><path d="M30 4 L36 3 L34 9Z" fill="#d09848"/></svg>
<svg class="a" style="left:1184px;top:739px" width="100" height="24" viewBox="0 0 100 24"><rect x="1" y="8" width="14" height="8" rx="1" fill="none" stroke="#e0e8f0" stroke-width="1.4"/><path d="M3 11H13M3 13H13" stroke="#e0e8f0" stroke-width="1" stroke-dasharray="1,1"/><rect x="27" y="2" width="7" height="4" fill="none" stroke="#fff" stroke-width="1"/><rect x="30" y="0" width="7" height="4" fill="none" stroke="#fff" stroke-width="1"/><path d="M29 11 L35 11 L32 15Z" fill="#fff"/><path d="M44 10 H47 L51 6 V18 L47 14 H44Z" fill="#fff"/><path d="M53 9 Q55 12 53 15 M55 7 Q58 12 55 17" stroke="#fff" stroke-width="1.2" fill="none"/><path d="M68 3 V10 M70 3 V10 M66 6 H72" stroke="#fff" stroke-width="1"/><rect x="68" y="9" width="12" height="10" fill="none" stroke="#fff"/><path d="M73 12 L79 18 M79 13 V18 H74" stroke="#e00000" stroke-width="2"/></svg>
<div class="t" style="left:1298px;top:733px;font-size:13.5px;color:#fff">10:54</div>
<div class="t" style="left:1280px;top:750px;font-size:13.5px;color:#fff">2015/12/15</div>
<div class="a" style="left:1351px;top:729px;width:15px;height:39px;border-left:1px solid rgba(255,255,255,.35);background:rgba(255,255,255,.12)"></div>
</body></html>
